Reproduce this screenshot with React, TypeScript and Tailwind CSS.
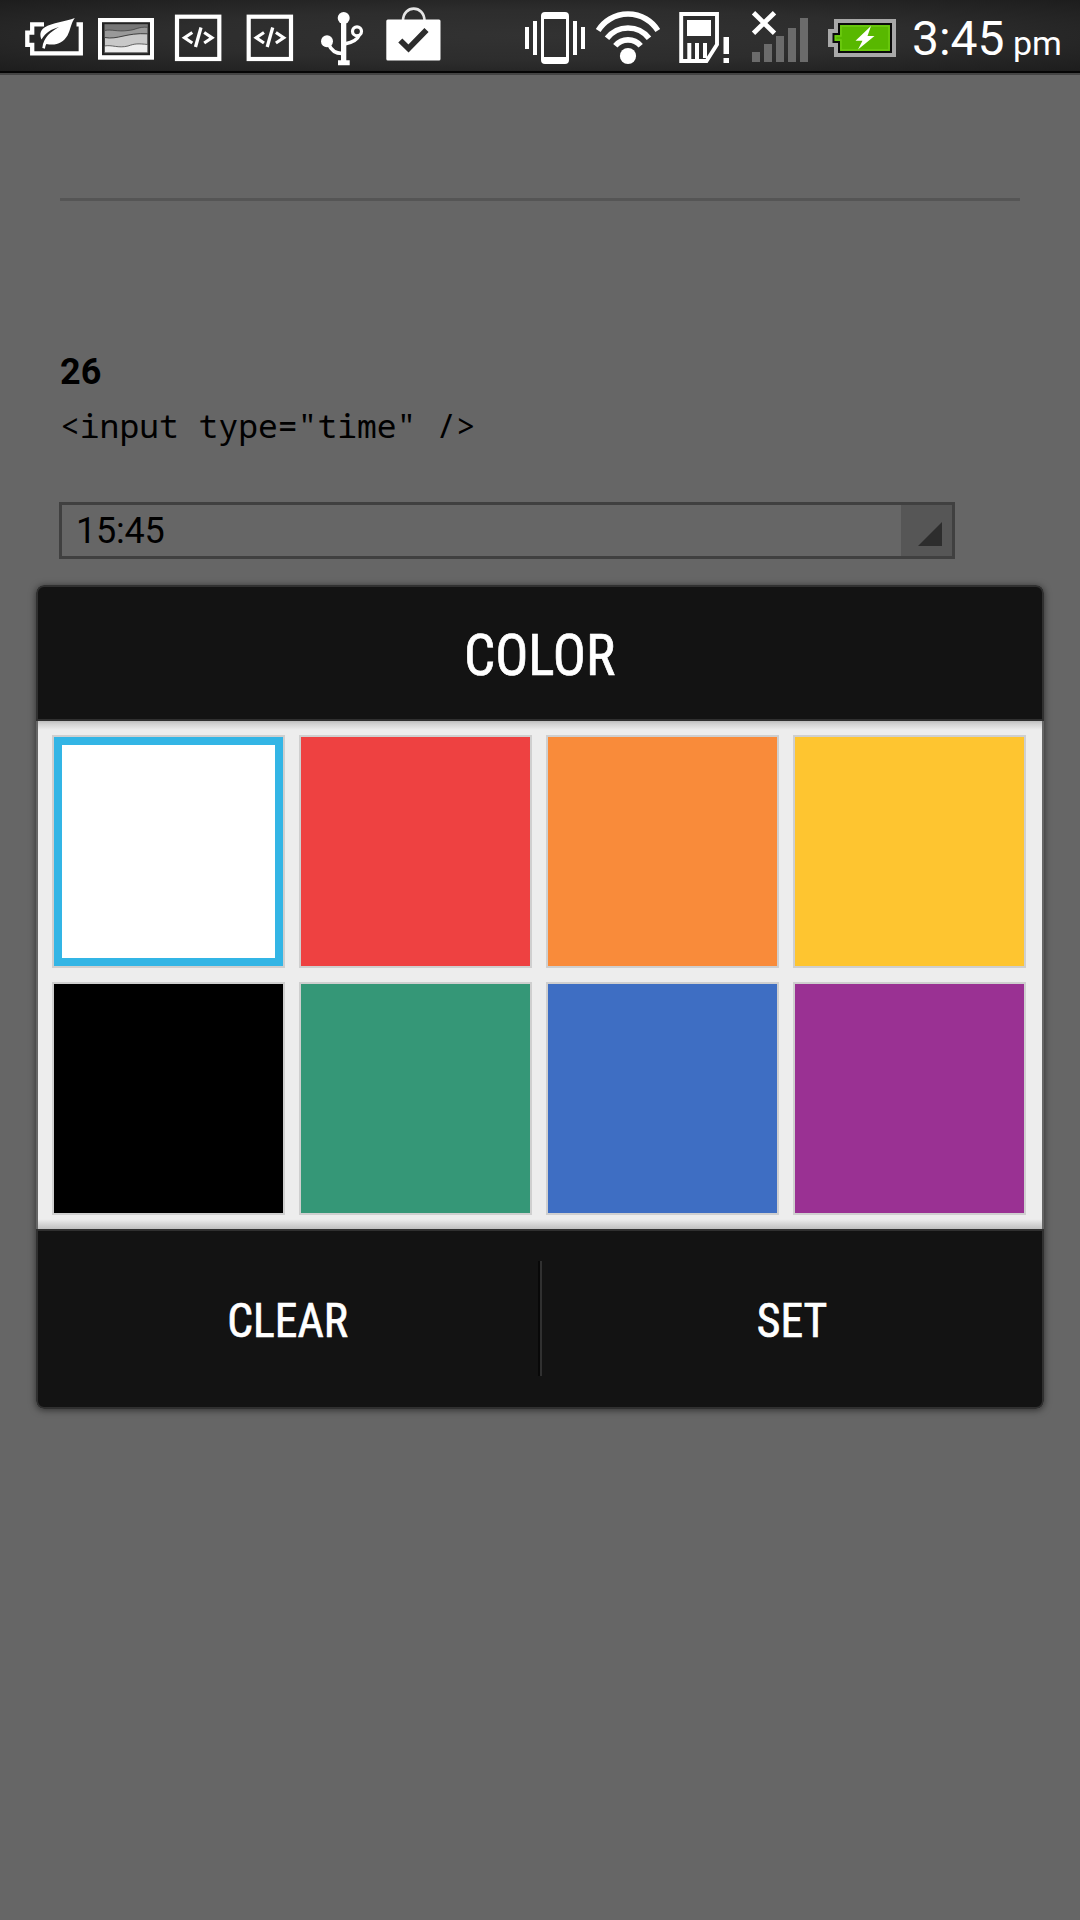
import type { ReactNode } from "react";

function Slot({ from, to, children }: { from: number; to: number; children?: ReactNode }) {
  return (
    <svg className="block h-[72px] shrink-0" width={to - from} height={72} viewBox={`${from} 0 ${to - from} 72`} fill="none">
      {children}
    </svg>
  );
}

function CodeIcon({ from, to, x }: { from: number; to: number; x: number }) {
  return (
    <Slot from={from} to={to}>
      <g transform={`translate(${x} 0)`} stroke="#fff">
        <rect x="2" y="16.7" width="42.3" height="42.3" strokeWidth="4.2" />
        <path d="M17.3 32.5 L9.5 37.7 L17.3 43" strokeWidth="3.2" />
        <path d="M29.2 32.5 L37 37.7 L29.2 43" strokeWidth="3.2" />
        <path d="M26 27.5 L20.5 47" strokeWidth="3.3" />
      </g>
    </Slot>
  );
}

function StatusBar() {
  return (
    <header className="flex h-[75px] w-full items-start border-b-2 border-[#444] bg-[#050505]">
      <div className="flex h-[71px] w-full bg-[radial-gradient(ellipse_at_center,#323232_0%,#2d2d2d_50%,#1d1d1d_100%)]">
        <Slot from={0} to={90}>
          <path d="M44 24.3 H32.2 V32.6 H27.3 V44.8 H32.2 V53.3 H80.8 V24.3 H76.5" stroke="#fff" strokeWidth="4.3" />
          <path
            d="M74.8 18 C66 21.5 52 22.5 44.5 27.5 C39.5 31 39.8 35.5 41.5 39.5 C46 32 51 29.5 59 27 C51 31.5 43.5 37 42.3 48 L45 48.8 C45.2 46.5 45.6 45.3 46.4 44 C56 46 63 43 67.5 35.5 C70.5 30 71 23 74.8 18Z"
            fill="#fff"
          />
        </Slot>
        <Slot from={90} to={165}>
          <rect x="98" y="18" width="56" height="41.7" fill="#fff" />
          <rect x="102" y="22.2" width="48" height="33" fill="#222" />
          <rect x="104.5" y="24.2" width="43.3" height="28.6" fill="#777" />
          <path d="M104.5 30.5 C112 29 117 32 128 30.5 C136 30 138 26.5 147.8 27.3 V52.8 H104.5Z" fill="#999" stroke="#444" strokeWidth=".8" />
          <path d="M104.5 37.5 C118 40 126 32.5 147.8 33.8 V52.8 H104.5Z" fill="#c8c8c8" stroke="#333" strokeWidth=".9" />
          <path d="M104.5 46 C112 44.5 118 48.5 128 46 C135 43.5 138 43.5 147.8 44.5 V52.8 H104.5Z" fill="#ececec" stroke="#444" strokeWidth=".8" />
        </Slot>
        <CodeIcon from={165} to={235} x={175} />
        <CodeIcon from={235} to={310} x={246.7} />
        <Slot from={310} to={375}>
          <circle cx="343.7" cy="18" r="6" fill="#fff" />
          <circle cx="327" cy="41.2" r="6" fill="#fff" />
          <path d="M341 16 H346.3 V60.3 H349.7 V65.3 H338 V60.3 H341Z" fill="#fff" />
          <circle cx="357" cy="31.3" r="4.5" stroke="#fff" strokeWidth="3.2" />
          <path d="M328.5 44 C331 50 335 53.5 342 53.5 M345.5 43.8 C352 42.5 357.5 40 359.5 34.5" stroke="#fff" strokeWidth="3.6" />
        </Slot>
        <Slot from={375} to={450}>
          <path d="M403 21 C403 4.5 424.5 4.5 424.5 21" stroke="#e5e5e5" strokeWidth="2.6" />
          <rect x="386.3" y="19.5" width="54.2" height="41" rx="1.5" fill="#fff" />
          <path d="M400.3 40.5 L408.5 48.5 L426.5 30" stroke="#2d2d2d" strokeWidth="5.8" />
        </Slot>
        <Slot from={450} to={590}>
          <path
            fillRule="evenodd"
            d="M545 12 H565 Q569 12 569 16 V60 Q569 64 565 64 H545 Q541 64 541 60 V16 Q541 12 545 12Z M544 19 V57 H566 V19Z"
            fill="#fff"
          />
          <path d="M527 27 V49 M535 21 V55 M575 21 V55 M583 27 V49" stroke="#fff" strokeWidth="4" />
        </Slot>
        <Slot from={590} to={670}>
          <circle cx="628" cy="56" r="8.1" fill="#fff" />
          <path
            d="M598.2 30.5 A35.2 35.2 0 0 1 657.8 30.5 M607 38.3 A26.5 26.5 0 0 1 649 38.3 M615.3 45.8 A16.5 16.5 0 0 1 640.7 45.8"
            stroke="#fff"
            strokeWidth="5.6"
          />
        </Slot>
        <Slot from={670} to={740}>
          <path d="M681.2 14 H717 V44.5 L706.5 61 H681.2Z" stroke="#fff" strokeWidth="3.9" />
          <path
            d="M687 20 H711 V36 H687Z M687.3 43 H691.3 V59 H687.3Z M695 43 H699 V59 H695Z M703 43 H707 V58 H703Z M723.5 37 H729 V54 H723.5Z M723.5 58 H729 V63 H723.5Z"
            fill="#fff"
          />
        </Slot>
        <Slot from={740} to={820}>
          <path d="M752 52 H760 V62 H752Z M764 44 H772 V62 H764Z M776 36 H784 V62 H776Z M788 28 H796 V62 H788Z M800 18 H808 V62 H800Z" fill="#6b6b6b" />
          <path d="M753.5 12.7 L774.5 33.3 M774.5 12.7 L753.5 33.3" stroke="#fff" strokeWidth="4.8" />
        </Slot>
        <Slot from={820} to={912}>
          <path d="M834 19 H896 V57 H834 V47 H828 V29 H834Z" fill="#a8a8a8" />
          <path d="M838 23 H892 V53 H838 V43 H832.5 V33 H838Z" fill="#0a0a0a" />
          <path d="M840 25 H890 V51 H840 V41 H834.5 V35 H840Z" fill="#58b800" />
          <path d="M841 26 H889 V50 H841 V40 H835.5 V36 H841Z" stroke="#6dca10" strokeWidth="1.5" />
          <path d="M871 26 L855.5 40.7 H862.5 L858 49.5 L874.5 36 H867.5Z" fill="#fff" />
        </Slot>
        <div className="flex items-baseline font-[Roboto] text-white">
          <span className="w-[101px] text-[48px] leading-[78px] whitespace-nowrap">3:45</span>
          <span className="text-[34px] leading-[78px]">pm</span>
        </div>
      </div>
    </header>
  );
}

function TimeField() {
  return (
    <div className="mt-[54px] -ml-px flex h-[57px] w-[896px] border-[3px] border-[#404040]">
      <span className="flex-1 pl-[14px] text-[36px] leading-[53px] tracking-[-0.25px] text-black">15:45</span>
      <span className="flex w-[51px] justify-end bg-[#565656] pt-[17px] pr-[10px]">
        <svg className="block" width="24" height="24" viewBox="0 0 24 24">
          <path d="M24 0 V24 H0Z" fill="#2d2d2d" />
        </svg>
      </span>
    </div>
  );
}

function Label({ children, className }: { children: string; className: string }) {
  return (
    <span
      className={`inline-block scale-x-[0.95] font-['Roboto_Condensed',Roboto] leading-none whitespace-nowrap text-white [-webkit-text-stroke:0.7px_white] [font-stretch:75%] ${className}`}
    >
      {children}
    </span>
  );
}

const swatches = [
  "bg-white",
  "bg-[#ee4141]",
  "bg-[#f98b3a]",
  "bg-[#fec530]",
  "bg-black",
  "bg-[#359777]",
  "bg-[#3e6ec3]",
  "bg-[#9a3193]",
];

function ColorDialog() {
  return (
    <section className="absolute top-[585px] left-[36px] flex h-[824px] w-[1008px] flex-col overflow-hidden rounded-[8px] bg-[#666] shadow-[0_1px_7px_rgba(0,0,0,0.55)]">
      <h1 className="flex h-[136px] items-center justify-center rounded-t-[8px] border-2 border-[#303030] bg-[#131313] pt-[4px]">
        <Label className="text-[58px]">COLOR</Label>
      </h1>
      <div className="mx-[2px] grid h-[508px] grid-cols-[repeat(4,233px)] grid-rows-[repeat(2,233px)] gap-[14px] bg-[linear-gradient(#bebebe_0px,#d2d2d2_3px,#ededed_9px,#ededed_498px,#bfbfbf_508px)] p-[14px]">
        {swatches.map((color, index) => (
          <button key={color} className="border-2 border-[#cfcfcf]">
            <span className={`block size-full ${color} ${index === 0 ? "border-8 border-[#33b5e5]" : ""}`} />
          </button>
        ))}
      </div>
      <div className="flex h-[180px] items-center rounded-b-[8px] border-2 border-[#303030] bg-[#131313]">
        <button className="flex-1 pt-[4px]">
          <Label className="text-[48px]">CLEAR</Label>
        </button>
        <span className="mb-[1px] h-[115px] w-[4px] border-r-2 border-l-2 border-r-[#303030] border-l-[#080808]" />
        <button className="flex-1 pt-[4px]">
          <Label className="text-[48px]">SET</Label>
        </button>
      </div>
    </section>
  );
}

export default function App() {
  return (
    <div className="relative h-[1920px] w-[1080px] overflow-hidden bg-[#666] font-[Roboto]">
      <StatusBar />
      <main className="px-[60px]">
        <hr className="mt-[123px] border-t-[3px] border-[#555]" />
        <h2 className="mt-[150px] text-[36px] leading-[42px] font-bold text-black">26</h2>
        <code className="mt-[11px] block font-['Noto_Sans_Mono','Droid_Sans_Mono','DejaVu_Sans_Mono',monospace] text-[33px] leading-[44px] text-black">
          {'<input type="time" />'}
        </code>
        <TimeField />
      </main>
      <ColorDialog />
    </div>
  );
}
